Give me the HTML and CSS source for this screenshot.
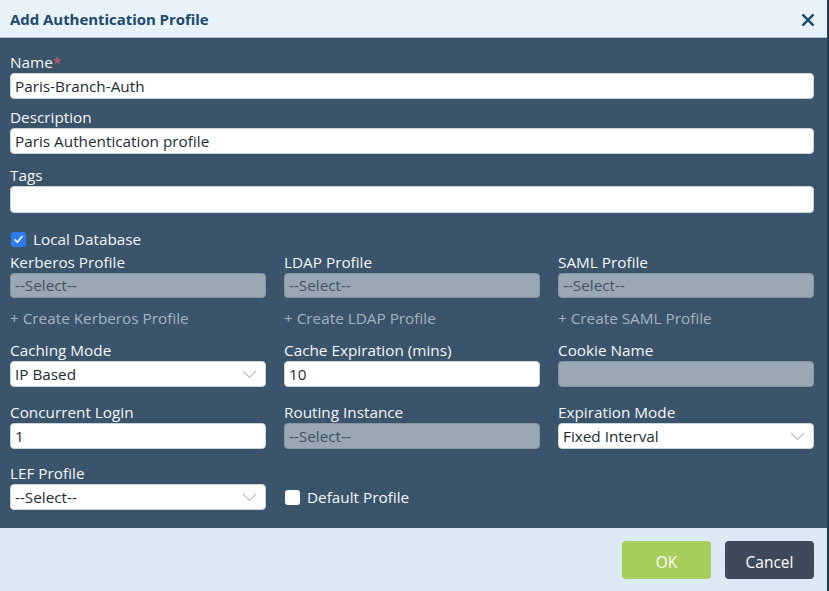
FILE: index.html
```html
<!DOCTYPE html>
<html>
<head>
<meta charset="utf-8">
<link rel="stylesheet" href="styles.css">
</head>
<body>
<div class="dialog">
  <div class="header">
    <span class="title">Add Authentication Profile</span>
    <svg class="close" width="12" height="12" viewBox="0 0 12 12"><path d="M1.2 1.2 L10.8 10.8 M10.8 1.2 L1.2 10.8" stroke="#1d4a6d" stroke-width="2.4" stroke-linecap="round"/></svg>
  </div>
  <div class="content">
    <div class="field f-name">
      <div class="label">Name<span class="req">*</span></div>
      <div class="input">Paris-Branch-Auth</div>
    </div>
    <div class="field f-desc">
      <div class="label">Description</div>
      <div class="input">Paris Authentication profile</div>
    </div>
    <div class="field f-tags">
      <div class="label">Tags</div>
      <div class="input tall"></div>
    </div>
    <div class="check-row">
      <span class="cb checked"><svg width="11" height="11" viewBox="0 0 11 11"><path d="M2 5.8 L4.4 8.3 L9 2.6" fill="none" stroke="#fff" stroke-width="1.6" stroke-linecap="round" stroke-linejoin="round"/></svg></span>
      <span class="cb-label">Local Database</span>
    </div>
    <div class="grid g1">
      <div class="cell">
        <div class="label">Kerberos Profile</div>
        <div class="input disabled short">--Select--</div>
      </div>
      <div class="cell">
        <div class="label">LDAP Profile</div>
        <div class="input disabled short">--Select--</div>
      </div>
      <div class="cell">
        <div class="label">SAML Profile</div>
        <div class="input disabled short">--Select--</div>
      </div>
    </div>
    <div class="grid links">
      <div class="link">+ Create Kerberos Profile</div>
      <div class="link">+ Create LDAP Profile</div>
      <div class="link">+ Create SAML Profile</div>
    </div>
    <div class="grid g2">
      <div class="cell">
        <div class="label">Caching Mode</div>
        <div class="input select">IP Based<svg class="chev" width="15" height="9" viewBox="0 0 15 9"><path d="M1 1 L7.5 7.5 L14 1" fill="none" stroke="#b9c0c6" stroke-width="1.2"/></svg></div>
      </div>
      <div class="cell">
        <div class="label">Cache Expiration (mins)</div>
        <div class="input">10</div>
      </div>
      <div class="cell">
        <div class="label">Cookie Name</div>
        <div class="input disabled"></div>
      </div>
    </div>
    <div class="grid g3">
      <div class="cell">
        <div class="label">Concurrent Login</div>
        <div class="input">1</div>
      </div>
      <div class="cell">
        <div class="label">Routing Instance</div>
        <div class="input disabled">--Select--</div>
      </div>
      <div class="cell">
        <div class="label">Expiration Mode</div>
        <div class="input select">Fixed Interval<svg class="chev" width="15" height="9" viewBox="0 0 15 9"><path d="M1 1 L7.5 7.5 L14 1" fill="none" stroke="#b9c0c6" stroke-width="1.2"/></svg></div>
      </div>
    </div>
    <div class="grid g4">
      <div class="cell">
        <div class="label">LEF Profile</div>
        <div class="input select">--Select--<svg class="chev" width="15" height="9" viewBox="0 0 15 9"><path d="M1 1 L7.5 7.5 L14 1" fill="none" stroke="#b9c0c6" stroke-width="1.2"/></svg></div>
      </div>
      <div class="cell bottom">
        <div class="check-inline">
          <span class="cb"></span>
          <span class="cb-label">Default Profile</span>
        </div>
      </div>
      <div class="cell"></div>
    </div>
  </div>
  <div class="footer">
    <button class="btn ok">OK</button>
    <button class="btn cancel">Cancel</button>
  </div>
</div>
</body>
</html>
```

FILE: styles.css
```css
* { box-sizing: border-box; }
html, body { margin: 0; padding: 0; }
body {
  width: 829px;
  height: 591px;
  overflow: hidden;
  font-family: "Open Sans", "Noto Sans", sans-serif;
  background: #dbeaf5;
}
.dialog {
  width: 829px;
  height: 591px;
  display: flex;
  flex-direction: column;
  border-right: 2px solid #26384a;
}
.header {
  height: 38px;
  background: #e7f2fb;
  border-bottom: 1px solid #a9bccb;
  display: flex;
  align-items: center;
  justify-content: space-between;
  padding: 0 13px 0 10px;
}
.title {
  font-family: "Open Sans", sans-serif;
  font-weight: 700;
  font-size: 15px;
  color: #1d4a6d;
  letter-spacing: -0.05px;
}
.close { margin-top: 2px; }
.content {
  background: #3a546b;
  height: 490px;
  padding: 16px 13px 0 10px;
  color: #ffffff;
  font-size: 15.3px;
}
.f-desc { margin-top: 10px; }
.f-tags { margin-top: 13px; }
.label {
  height: 19px;
  line-height: 17px;
  font-size: 15.3px;
  color: #f4f6f8;
  white-space: nowrap;
}
.req { color: #e0566a; }
.input {
  height: 26px;
  background: #ffffff;
  border: 1px solid #c9d3db;
  border-radius: 4px;
  color: #1e2a33;
  font-size: 15.3px;
  line-height: 24px;
  padding: 0 4px;
  position: relative;
  white-space: nowrap;
}
.input.tall { height: 27px; }
.input.short { height: 25px; line-height: 23px; }
.input.disabled {
  background: #9aa8b3;
  border-color: #8796a3;
  color: #3f5262;
}
.chev {
  position: absolute;
  right: 8px;
  top: 8px;
}
.check-row {
  margin-top: 16px;
  height: 20px;
  display: flex;
  align-items: center;
  gap: 7px;
  padding-left: 1px;
}
.cb {
  width: 15px;
  height: 15px;
  border-radius: 3px;
  background: #ffffff;
  display: inline-flex;
  align-items: center;
  justify-content: center;
}
.cb.checked { background: #2f7cf0; }
.cb-label { font-size: 15.3px; color: #f4f6f8; }
.grid {
  display: grid;
  grid-template-columns: 256px 256px 256px;
  column-gap: 18px;
}
.g1 { margin-top: 5px; }
.links { margin-top: 11px; height: 20px; line-height: 19px; }
.link { font-size: 15.3px; color: #a4b3c1; white-space: nowrap; }
.g2 { margin-top: 13px; }
.g3 { margin-top: 17px; }
.g4 { margin-top: 16px; }
.cell.bottom { display: flex; align-items: flex-end; }
.check-inline {
  height: 26px;
  display: flex;
  align-items: center;
  gap: 7px;
  padding-left: 1px;
}
.footer {
  flex: 1;
  background: #dbeaf5;
  display: flex;
  justify-content: flex-end;
  align-items: flex-start;
  gap: 14px;
  padding: 13px 13px 0 0;
}
.btn {
  width: 89px;
  height: 38px;
  border: none;
  border-radius: 4px;
  font-family: "Open Sans", sans-serif;
  font-size: 15.5px;
  color: #ffffff;
  padding: 3px 0 0 0;
}
.ok { background: #a7cd5b; }
.cancel { background: #3d4a5b; }
```
